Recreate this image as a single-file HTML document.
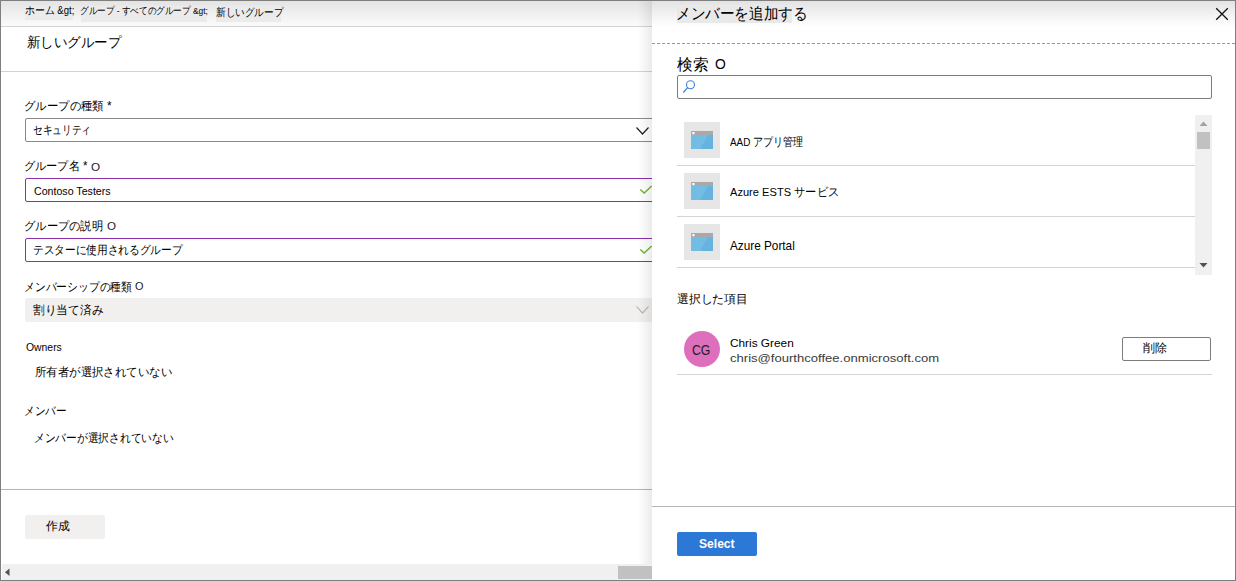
<!DOCTYPE html>
<html><head><meta charset="utf-8">
<style>
html,body{margin:0;padding:0;}
body{width:1236px;height:581px;position:relative;overflow:hidden;background:#fff;font-family:"Liberation Sans",sans-serif;}
.a{position:absolute;}
.t{position:absolute;white-space:nowrap;line-height:1;transform-origin:0 0;}
.hl{position:absolute;height:1px;}
.tile{position:absolute;left:684px;width:36px;height:36px;background:#e6e6e6;}
</style></head><body>
<!-- left panel -->
<div class="a" style="left:0;top:0;width:652px;height:27px;background:linear-gradient(#e3e3e3,#fcfcfc)"></div>
<div class="a" style="left:25px;top:6px;width:48px;height:14px;background:#ebebeb"></div>
<div class="a" style="left:81px;top:6px;width:126px;height:16px;background:#ebebeb"></div>
<div class="a" style="left:216px;top:6px;width:65px;height:16px;background:#ebebeb"></div>
<div class="hl" style="left:0;top:26px;width:652px;background:#d2d2d2"></div>
<div class="hl" style="left:0;top:71px;width:652px;background:#d2d2d2"></div>

<div class="a" style="left:25px;top:118px;width:640px;height:22px;border:1px solid #8a8a8a;border-radius:2px"></div>
<div class="a" style="left:25px;top:178px;width:640px;height:22px;border:1px solid #8b2fab;border-radius:2px"></div>
<div class="a" style="left:25px;top:238px;width:640px;height:22px;border:1px solid #8b2fab;border-radius:2px"></div>
<div class="a" style="left:25px;top:298px;width:640px;height:24px;background:#f1f0ef;border-radius:2px"></div>
<svg class="a" style="left:635px;top:126px" width="16" height="10" viewBox="0 0 16 10"><polyline points="1.5,1.5 7.5,8 13.5,1.5" fill="none" stroke="#222" stroke-width="1.2"/></svg>
<svg class="a" style="left:635px;top:305px" width="16" height="10" viewBox="0 0 16 10"><polyline points="1.5,1.5 7.5,8 13.5,1.5" fill="none" stroke="#a8a8a8" stroke-width="1.1"/></svg>
<svg class="a" style="left:639px;top:185px" width="14" height="10" viewBox="0 0 14 10"><polyline points="1.3,4.5 5.2,8 12.7,1" fill="none" stroke="#6db42e" stroke-width="1.4"/></svg>
<svg class="a" style="left:639px;top:245px" width="14" height="10" viewBox="0 0 14 10"><polyline points="1.3,4.5 5.2,8 12.7,1" fill="none" stroke="#6db42e" stroke-width="1.4"/></svg>

<div class="hl" style="left:0;top:489px;width:652px;background:#b4b4b4"></div>
<div class="a" style="left:25px;top:515px;width:80px;height:24px;background:#f1f0ef;border-radius:2px"></div>
<div class="a" style="left:2px;top:564px;width:650px;height:16px;background:#f0f0f0"></div>
<div class="a" style="left:618px;top:566px;width:34px;height:13px;background:#c1c1c1"></div>
<svg class="a" style="left:4px;top:568px" width="7" height="9" viewBox="0 0 7 9"><polygon points="5.5,0.5 5.5,8 1,4.25" fill="#505050"/></svg>
<div class="a" style="left:638px;top:1px;width:14px;height:563px;background:linear-gradient(90deg,rgba(0,0,0,0),rgba(0,0,0,0.08))"></div>

<!-- right panel -->
<div class="a" style="left:652px;top:0;width:584px;height:581px;background:#fff"></div>
<div class="a" style="left:652px;top:0;width:584px;height:30px;background:linear-gradient(#e2e2e2 0px,#f6f6f6 18px,#fff 28px)"></div>
<div class="a" style="left:677px;top:5px;width:115px;height:18px;background:#e9e9e9"></div>
<svg class="a" style="left:1214px;top:6px" width="16" height="16" viewBox="0 0 16 16"><path d="M2.2 2.2 L13.8 13.8 M13.8 2.2 L2.2 13.8" stroke="#111" stroke-width="1.3"/></svg>
<div class="a" style="left:652px;top:43px;width:584px;height:1px;background:repeating-linear-gradient(90deg,#3cb4ee 0,#3cb4ee 3px,transparent 3px,transparent 5px)"></div>

<div class="a" style="left:677px;top:75px;width:533px;height:22px;border:1px solid #7c7c7c;border-radius:2px"></div>
<svg class="a" style="left:682px;top:79px" width="14" height="15" viewBox="0 0 14 15"><circle cx="8.5" cy="5.8" r="4" fill="none" stroke="#3b7fd9" stroke-width="1.1"/><line x1="5.6" y1="8.7" x2="1.3" y2="13.5" stroke="#3b7fd9" stroke-width="1.2"/></svg>

<div class="tile" style="top:122px"></div><div style="position:absolute;left:691px;top:131px;width:22px;height:18px"><svg width="22" height="18" viewBox="0 0 22 18"><rect x="0" y="0" width="22" height="18" fill="#73bce3"/><polygon points="22,4 22,18 9,18 17,4" fill="#66b4de"/><rect x="0" y="0" width="22" height="4" fill="#a9a9a9"/><rect x="1.3" y="1" width="2.2" height="2.2" fill="#fff"/></svg></div><div class="tile" style="top:173px"></div><div style="position:absolute;left:691px;top:182px;width:22px;height:18px"><svg width="22" height="18" viewBox="0 0 22 18"><rect x="0" y="0" width="22" height="18" fill="#73bce3"/><polygon points="22,4 22,18 9,18 17,4" fill="#66b4de"/><rect x="0" y="0" width="22" height="4" fill="#a9a9a9"/><rect x="1.3" y="1" width="2.2" height="2.2" fill="#fff"/></svg></div><div class="tile" style="top:224px"></div><div style="position:absolute;left:691px;top:233px;width:22px;height:18px"><svg width="22" height="18" viewBox="0 0 22 18"><rect x="0" y="0" width="22" height="18" fill="#73bce3"/><polygon points="22,4 22,18 9,18 17,4" fill="#66b4de"/><rect x="0" y="0" width="22" height="4" fill="#a9a9a9"/><rect x="1.3" y="1" width="2.2" height="2.2" fill="#fff"/></svg></div>
<div class="hl" style="left:677px;top:165px;width:518px;background:#d4d4d4"></div>
<div class="hl" style="left:677px;top:216px;width:518px;background:#d4d4d4"></div>
<div class="hl" style="left:677px;top:267px;width:518px;background:#d4d4d4"></div>
<div class="a" style="left:1195px;top:115px;width:17px;height:160px;background:#f0f0f0"></div>
<div class="a" style="left:1197px;top:132px;width:13px;height:17px;background:#c1c1c1"></div>
<svg class="a" style="left:1199px;top:120px" width="9" height="7" viewBox="0 0 9 7"><polygon points="0.5,6 8.5,6 4.5,1.5" fill="#a3a3a3"/></svg>
<svg class="a" style="left:1199px;top:262px" width="9" height="7" viewBox="0 0 9 7"><polygon points="0.5,1 8.5,1 4.5,5.5" fill="#505050"/></svg>

<div class="a" style="left:684px;top:331px;width:36px;height:36px;border-radius:50%;background:#de6fbd"></div>
<div class="a" style="left:1122px;top:337px;width:87px;height:22px;border:1px solid #7c7c7c;border-radius:2px"></div>
<div class="hl" style="left:677px;top:374px;width:535px;background:#d4d4d4"></div>
<div class="hl" style="left:652px;top:506px;width:584px;background:#b4b4b4"></div>
<div class="a" style="left:677px;top:532px;width:80px;height:24px;background:#2b78d6;border-radius:2px"></div>

<div id="bc1" class="t" style="left:25.20px;top:5.40px;font-size:10.6px;font-weight:400;color:#000;transform:scaleX(0.9004)">ホーム &amp;gt;</div>
<div id="bc2" class="t" style="left:80.14px;top:6.10px;font-size:9.7px;font-weight:400;color:#000;transform:scaleX(0.8603)">グループ - すべてのグループ &amp;gt;</div>
<div id="bc3" class="t" style="left:216.00px;top:7.20px;font-size:10.5px;font-weight:400;color:#000;transform:scaleX(0.8749)">新しいグループ</div>
<div id="title" class="t" style="left:27.00px;top:34.80px;font-size:14.4px;font-weight:400;color:#000;transform:scaleX(0.9617)">新しいグループ</div>
<div id="l1" class="t" style="left:24.23px;top:99.60px;font-size:12.4px;font-weight:400;color:#000;transform:scaleX(0.9491)">グループの種類 *</div>
<div id="v1" class="t" style="left:33.07px;top:123.80px;font-size:12.4px;font-weight:400;color:#000;transform:scaleX(0.8077)">セキュリティ</div>
<div id="l2" class="t" style="left:24.27px;top:159.60px;font-size:12.4px;font-weight:400;color:#000;transform:scaleX(0.9294)">グループ名 *</div>
<div id="l2O" class="t" style="left:91.40px;top:162.10px;font-size:11.5px;font-weight:400;color:#222;transform:scaleX(1.0180)">O</div>
<div id="v2" class="t" style="left:33.89px;top:185.40px;font-size:11.7px;font-weight:400;color:#000;transform:scaleX(0.9097)">Contoso Testers</div>
<div id="l3" class="t" style="left:24.25px;top:220.10px;font-size:12.4px;font-weight:400;color:#000;transform:scaleX(0.9410)">グループの説明</div>
<div id="l3O" class="t" style="left:107.38px;top:221.30px;font-size:11.5px;font-weight:400;color:#222;transform:scaleX(1.0082)">O</div>
<div id="v3" class="t" style="left:32.61px;top:244.40px;font-size:12.4px;font-weight:400;color:#000;transform:scaleX(0.8897)">テスターに使用されるグループ</div>
<div id="l4" class="t" style="left:24.26px;top:281.20px;font-size:12.4px;font-weight:400;color:#000;transform:scaleX(0.8989)">メンバーシップの種類</div>
<div id="l4O" class="t" style="left:135.15px;top:281.10px;font-size:11.5px;font-weight:400;color:#222;transform:scaleX(0.9497)">O</div>
<div id="v4" class="t" style="left:33.46px;top:304.40px;font-size:12.4px;font-weight:400;color:#000;transform:scaleX(0.9773)">割り当て済み</div>
<div id="own" class="t" style="left:25.69px;top:342.40px;font-size:11.4px;font-weight:400;color:#000;transform:scaleX(0.9121)">Owners</div>
<div id="ownv" class="t" style="left:34.53px;top:366.40px;font-size:12.2px;font-weight:400;color:#000;transform:scaleX(0.9508)">所有者が選択されていない</div>
<div id="mem" class="t" style="left:24.13px;top:405.40px;font-size:12.4px;font-weight:400;color:#000;transform:scaleX(0.8826)">メンバー</div>
<div id="memv" class="t" style="left:33.66px;top:432.20px;font-size:12.2px;font-weight:400;color:#000;transform:scaleX(0.8943)">メンバーが選択されていない</div>
<div id="create" class="t" style="left:46.17px;top:521.40px;font-size:11.8px;font-weight:400;color:#000;transform:scaleX(0.9888)">作成</div>
<div id="rtitle" class="t" style="left:675.98px;top:5.70px;font-size:16.0px;font-weight:400;color:#000;transform:scaleX(0.9117)">メンバーを追加する</div>
<div id="search" class="t" style="left:676.90px;top:56.60px;font-size:15.6px;font-weight:400;color:#000;transform:scaleX(0.9822)">検索</div>
<div id="searchO" class="t" style="left:714.50px;top:57.00px;font-size:14.8px;font-weight:400;color:#000;transform:scaleX(0.9373)">O</div>
<div id="i1" class="t" style="left:730.19px;top:137.20px;font-size:11.8px;font-weight:400;color:#000;transform:scaleX(0.8403)">AAD アプリ管理</div>
<div id="i2" class="t" style="left:730.17px;top:186.90px;font-size:11.8px;font-weight:400;color:#000;transform:scaleX(0.9408)">Azure ESTS サービス</div>
<div id="i3" class="t" style="left:730.21px;top:240.10px;font-size:12.7px;font-weight:400;color:#000;transform:scaleX(0.9275)">Azure Portal</div>
<div id="sel" class="t" style="left:677.09px;top:293.00px;font-size:12.2px;font-weight:400;color:#000;transform:scaleX(0.9859)">選択した項目</div>
<div id="cg" class="t" style="left:692.43px;top:344.30px;font-size:13.9px;font-weight:400;color:#222;transform:scaleX(0.8840)">CG</div>
<div id="cname" class="t" style="left:729.81px;top:337.30px;font-size:11.6px;font-weight:400;color:#000;transform:scaleX(1.0194)">Chris Green</div>
<div id="email" class="t" style="left:729.86px;top:352.60px;font-size:11.0px;font-weight:400;color:#3a3a3a;transform:scaleX(1.1878)">chris@fourthcoffee.onmicrosoft.com</div>
<div id="del" class="t" style="left:1143.49px;top:343.40px;font-size:11.8px;font-weight:400;color:#000;transform:scaleX(1.0034)">削除</div>
<div id="selbtn" class="t" style="left:698.53px;top:537.50px;font-size:12.9px;font-weight:700;color:#fff;transform:scaleX(0.9380)">Select</div>

<!-- outer border -->
<div class="a" style="left:0;top:0;width:1234px;height:579px;border:1px solid #7f7f7f"></div>
</body></html>
